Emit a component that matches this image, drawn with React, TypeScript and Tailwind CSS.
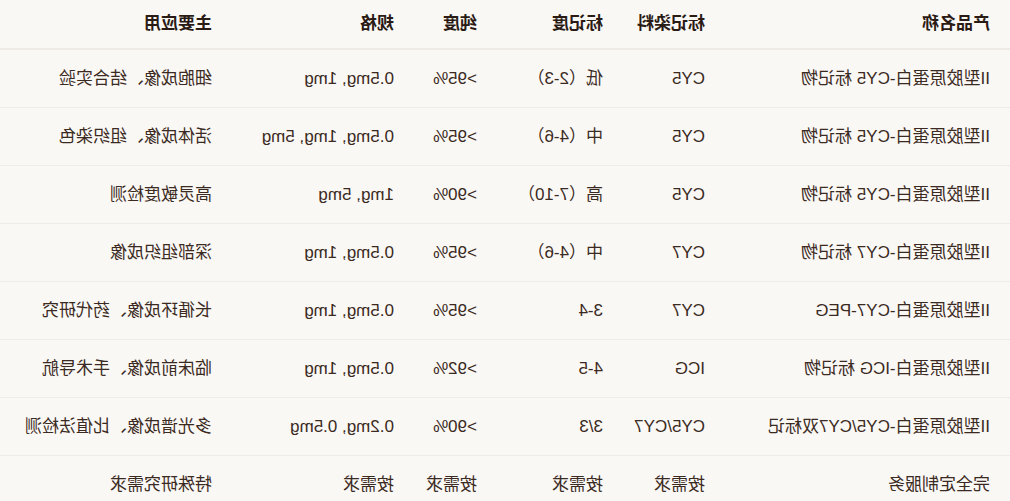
const rows = [
  ["II型胶原蛋白-CY5 标记物", "CY5", "低（2-3）", ">95%", "0.5mg, 1mg", "细胞成像、结合实验"],
  ["II型胶原蛋白-CY5 标记物", "CY5", "中（4-6）", ">95%", "0.5mg, 1mg, 5mg", "活体成像、组织染色"],
  ["II型胶原蛋白-CY5 标记物", "CY5", "高（7-10）", ">90%", "1mg, 5mg", "高灵敏度检测"],
  ["II型胶原蛋白-CY7 标记物", "CY7", "中（4-6）", ">95%", "0.5mg, 1mg", "深部组织成像"],
  ["II型胶原蛋白-CY7-PEG", "CY7", "3-4", ">95%", "0.5mg, 1mg", "长循环成像、药代研究"],
  ["II型胶原蛋白-ICG 标记物", "ICG", "4-5", ">92%", "0.5mg, 1mg", "临床前成像、手术导航"],
  ["II型胶原蛋白-CY5/CY7双标记", "CY5/CY7", "3/3", ">90%", "0.2mg, 0.5mg", "多光谱成像、比值法检测"],
  ["完全定制服务", "按需求", "按需求", "按需求", "按需求", "特殊研究需求"],
];

const headers = ["产品名称", "标记染料", "标记度", "纯度", "规格", "主要应用"];
const widths = ["w-[285px]", "w-[102px]", "w-[126px]", "w-[83px]", "w-[182px]", "w-[232px]"];

export default function App() {
  return (
    <div className="w-[1010px] h-[501px] overflow-hidden bg-[#faf8f5] font-['Liberation_Sans','Noto_Sans_CJK_SC',sans-serif] text-[#3a2a22]">
      {/* the whole table is shown mirrored */}
      <div className="-scale-x-100">
        <table className="w-full table-fixed border-collapse text-left">
          <colgroup>
            {widths.map((w, i) => (
              <col key={i} className={w} />
            ))}
          </colgroup>
          <thead>
            <tr className="border-b-2 border-[#eeebe6]">
              {headers.map((h) => (
                <th key={h} className="px-5 py-3 text-[17px] leading-6 font-bold whitespace-nowrap text-[#2a1b14]">
                  {h}
                </th>
              ))}
            </tr>
          </thead>
          <tbody>
            {rows.map((r, i) => (
              <tr key={i} className="border-b border-[#efece8]">
                {r.map((c, j) => (
                  <td key={j} className="px-5 py-[16.5px] text-[17px] leading-6 whitespace-nowrap">
                    {c}
                  </td>
                ))}
              </tr>
            ))}
          </tbody>
        </table>
      </div>
    </div>
  );
}
